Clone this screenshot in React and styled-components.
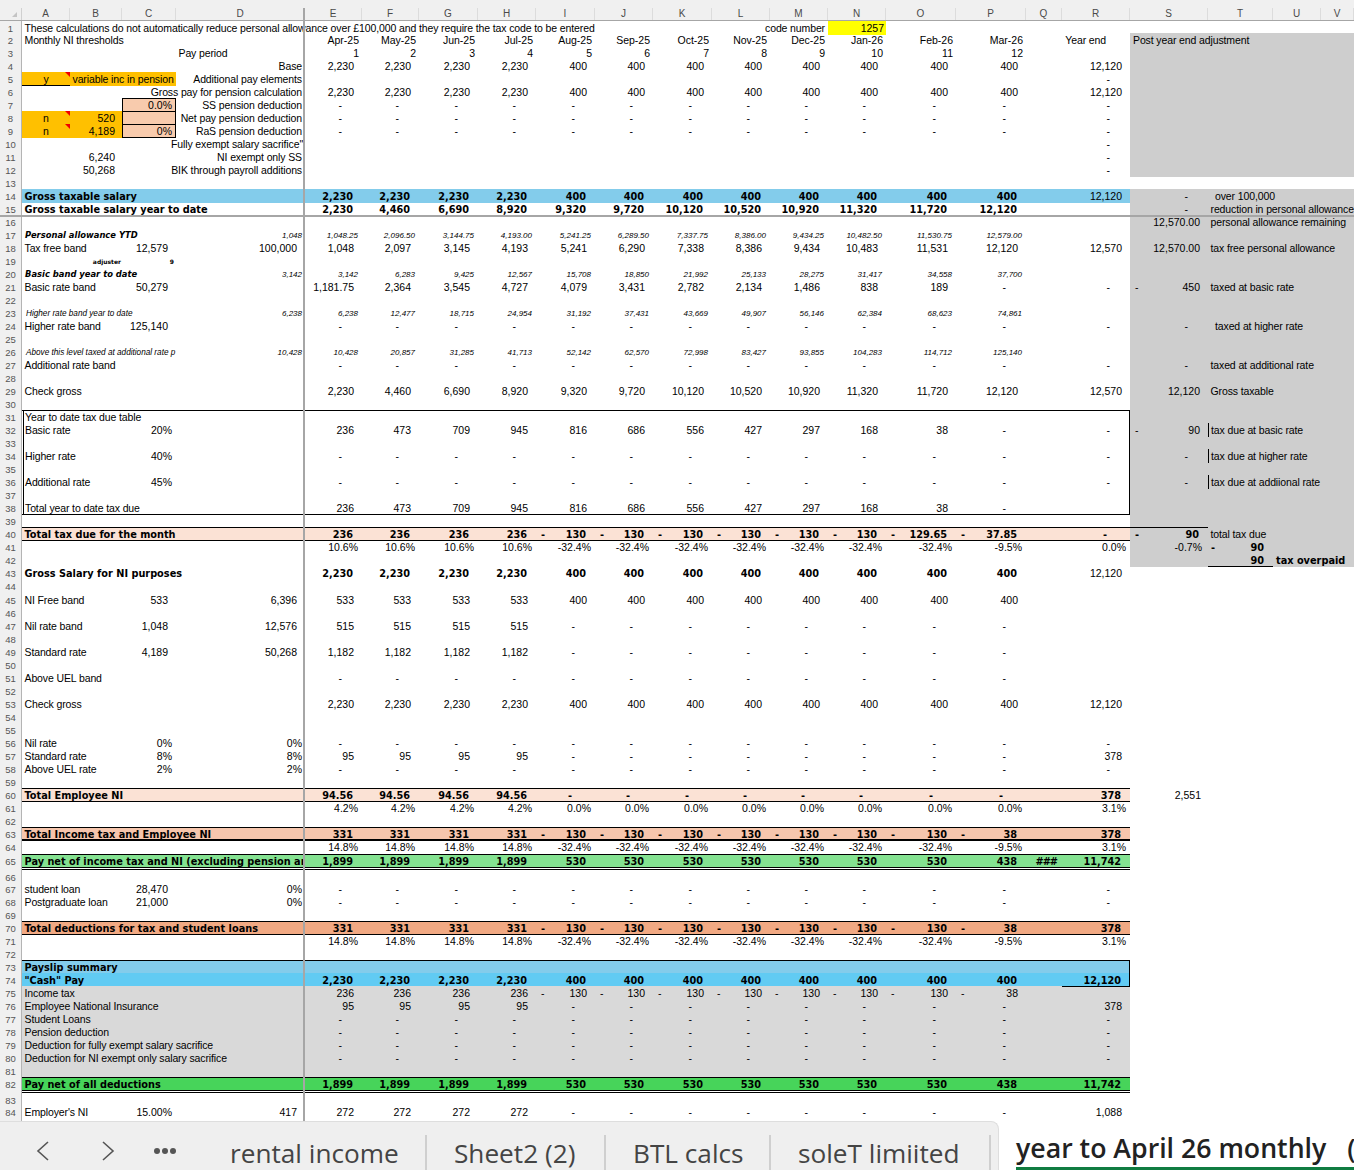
import React from 'react';
import styled, { createGlobalStyle } from 'styled-components';

const GlobalStyle = createGlobalStyle`
    html, body { margin: 0; padding: 0; background: #fff; }
    body { font-family: "Liberation Sans", Arial, sans-serif; }
`;

const COLS = ['A','B','C','D','E','F','G','H','I','J','K','L','M','N','O','P','Q','R','S','T','U','V'];
const MONTHS = COLS.slice(4, 16);
const WIDTHS = '22px 48px 52px 54px 129px 57px 57px 59px 58px 59px 58px 59px 58px 58px 58px 70px 70px 36px 68px 78px 65px 48px 33px';
const colIndex = (c) => COLS.indexOf(c);

const ROW_HEIGHTS = { 1: 12, 44: 14, 64: 14, 65: 16, 66: 12, 82: 16, 83: 12 };

const fonts = {
    text: 'font: 400 10.5px/13px "Liberation Sans", Arial, sans-serif;',
    label: 'font: 400 10.5px/13px "Liberation Sans", Arial, sans-serif; letter-spacing: -0.12px;',
    bold: 'font: 700 9.75px/13px "DejaVu Sans", Verdana, sans-serif;',
    hashes: 'font: 700 9.75px/13px "DejaVu Sans", Verdana, sans-serif; letter-spacing: -1px;',
    boldItalic: 'font: italic 700 8.4px/13px "DejaVu Sans", Verdana, sans-serif;',
    italic: 'font: italic 400 8px/13px "Liberation Sans", Arial, sans-serif;',
    italicLabel: 'font: italic 400 8.2px/13px "Liberation Sans", Arial, sans-serif;',
    tiny: 'font: 700 6px/13px "DejaVu Sans", Verdana, sans-serif;',
};

const Page = styled.div`
    position: relative;
    width: 1354px;
    height: 1170px;
    overflow: hidden;
    display: flex;
    flex-direction: column;
    background: #fff;
`;

const HeaderRow = styled.div`
    display: grid;
    grid-template-columns: ${WIDTHS};
    height: 21px;
    flex: none;
    background: #f0f0f0;
    border-bottom: 1px solid #a6a6a6;
    box-sizing: border-box;
`;

const Corner = styled.div`
    display: flex;
    justify-content: flex-end;
    align-items: flex-end;
    padding: 0 4px 3px 0;
    border-right: 1px solid #d0d0d0;
    margin-top: 8px;
    &::after {
        content: "";
        border-style: solid;
        border-width: 0 0 5px 5px;
        border-color: transparent transparent #c4c4c4 transparent;
    }
`;

const ColumnLabel = styled.div`
    display: flex;
    justify-content: center;
    align-items: center;
    margin-top: 8px;
    border-right: 1px solid #dcdcdc;
    color: #4a4a4a;
    font: 400 10px/12px "Liberation Sans", Arial, sans-serif;
`;

const Sheet = styled.div`
    height: 1100px;
    flex: none;
    overflow: hidden;
`;

const Row = styled.div`
    display: grid;
    grid-template-columns: ${WIDTHS};
    height: ${({ $height }) => $height}px;
`;

const RowNumber = styled.div`
    display: flex;
    justify-content: center;
    background: #f0f0f0;
    border-right: 1px solid #b4b4b4;
    box-sizing: border-box;
    padding-top: 1px;
    color: #555;
    font: 400 9.5px/13px "Liberation Sans", Arial, sans-serif;
    z-index: 2;
`;

const Cell = styled.div`
    position: relative;
    display: flex;
    min-width: 0;
    box-sizing: border-box;
    white-space: pre;
    color: #000;
    justify-content: ${({ $align }) => ({ left: 'flex-start', right: 'flex-end', center: 'center', lead: 'space-between' }[$align] || 'flex-start')};
    padding: 1px ${({ $right }) => $right || 0}px 0 ${({ $left }) => $left || 0}px;
    background: ${({ $fill }) => $fill || 'transparent'};
    box-shadow: ${({ $edges }) => $edges || 'none'};
    overflow: ${({ $clip }) => ($clip ? 'hidden' : 'visible')};
    grid-column: ${({ $span }) => ($span ? `span ${$span}` : 'auto')};
    z-index: ${({ $filled }) => ($filled ? 1 : 'auto')};
    ${({ $kind }) => fonts[$kind || 'text']}
`;

const CommentFlag = styled.span`
    position: absolute;
    top: 0;
    right: 0;
    border-style: solid;
    border-width: 0 5px 5px 0;
    border-color: transparent #f00000 transparent transparent;
`;

const FreezeColumn = styled.div`
    position: absolute;
    left: 303px;
    top: 8px;
    width: 2px;
    height: 1113px;
    background: #a6a6a6;
    z-index: 3;
`;

const FreezeRow = styled.div`
    position: absolute;
    left: 0;
    right: 0;
    top: 215px;
    height: 2px;
    background: #a6a6a6;
    z-index: 3;
`;

const TabBar = styled.div`
    flex: 1;
    display: flex;
    min-height: 0;
`;

const TabStrip = styled.div`
    width: 999px;
    flex: none;
    box-sizing: border-box;
    display: flex;
    background: #efefef;
    border-top: 1px solid #dedede;
    border-right: 1px solid #dedede;
    border-top-right-radius: 8px;
`;

const NavArea = styled.div`
    width: 203px;
    flex: none;
    box-sizing: border-box;
    padding: 19px 0 0 36px;
    display: flex;
    align-items: flex-start;
`;

const NavIcon = styled.svg`
    flex: none;
    margin-right: ${({ $gap }) => $gap}px;
`;

const Tab = styled.div`
    height: 35px;
    margin-top: 13px;
    width: ${({ $width }) => $width}px;
    flex: none;
    box-sizing: border-box;
    border-right: 2px solid #cfcfcf;
    padding-left: 27px;
    color: #444;
    font: 400 26.2px/36px "Open Sans", "Noto Sans", sans-serif;
    white-space: nowrap;
`;

const ActiveTab = styled.div`
    flex: 1;
    min-width: 0;
    padding-left: 17px;
    display: flex;
    flex-direction: column;
    overflow: hidden;
    background: #fff;
`;

const ActiveLabel = styled.div`
    margin-top: 9px;
    height: 37px;
    color: #222;
    font: 600 26.7px/36px "Open Sans", "Noto Sans", sans-serif;
    white-space: pre;
`;

const ActiveUnderline = styled.div`
    height: 3px;
    background: #107c41;
`;

/* cell helpers */
const L = (t, left = 2.5, kind = 'label') => ({ t, align: 'left', left, kind });
const Lab = (t, right = 3) => ({ t, align: 'right', right, kind: 'label' });
const Num = (t, right = 8) => ({ t, align: 'right', right });
const Bold = (t, right = 9) => ({ t, align: 'right', right, kind: 'bold' });
const Dash = (right = 20) => ({ t: '-', align: 'right', right });
const Pct = (t, right = 4) => ({ t, align: 'right', right });
const Ital = (t) => ({ t, align: 'right', right: 3, kind: 'italic' });

const parse = (v, kind) => {
    const bold = kind === 'bold';
    const pad = kind === 'pct' ? 4 : kind === 'date' || kind === 'period' ? 3 : kind === 'italic' ? 4 : bold ? 9 : 8;
    const font = bold ? 'bold' : kind === 'italic' ? 'italic' : 'text';
    if (v === '-') return { t: '-', align: 'right', right: bold ? 23 : 20, kind: font };
    if (v.startsWith('~')) return { t: v.slice(1), lead: true, align: 'lead', left: 5, right: pad, kind: font };
    return { t: v, align: 'right', right: pad, kind: font };
};

const series = (vals, kind = 'num') => {
    const out = {};
    vals.forEach((v, i) => { if (v !== null) out[MONTHS[i]] = parse(v, kind); });
    return out;
};

const rep = (a, n) => Array(n).fill(a);
const GROSS = [...rep('2,230', 4), ...rep('400', 8)];
const DASHES = rep('-', 12);
const YTD = ['2,230','4,460','6,690','8,920','9,320','9,720','10,120','10,520','10,920','11,320','11,720','12,120'];
const YTD_TAX = ['236','473','709','945','816','686','556','427','297','168','38','-'];
const NEG_130 = [...rep('~130', 7), '~38'];
const PCT_14 = [...rep('14.8%', 4), ...rep('-32.4%', 7), '-9.5%'];

const ORANGE = '#ffc000';
const PEACH = '#f8cbad';
const rd = { R: Dash() };
const boxLeft = 'inset 1px 0 0 #fff, inset 2px 0 0 #000';

const rows = [
    { n: 1, cells: { A: L('These calculations do not automatically reduce personal allowance over £100,000 and they require the tax code to be entered'), M: Lab('code number'), N: { ...Num('1257', 2), fill: '#ffff00' } } },
    { n: 2, cells: { A: L('Monthly NI thresholds'), ...series(['Apr-25','May-25','Jun-25','Jul-25','Aug-25','Sep-25','Oct-25','Nov-25','Dec-25','Jan-26','Feb-26','Mar-26'], 'date'), R: Lab('Year end', 24), S: L('Post year end adjustment', 3) } },
    { n: 3, cells: { D: L('Pay period'), ...series(['1','2','3','4','5','6','7','8','9','10','11','12'], 'period') } },
    { n: 4, cells: { D: Lab('Base'), ...series(GROSS), R: Num('12,120') } },
    { n: 5, cells: { A: { t: 'y', align: 'center', fill: ORANGE, flag: true, edges: 'inset 0 -1px 0 #000' }, B: { ...L('variable inc in pension'), fill: ORANGE }, C: { fill: ORANGE }, D: Lab('Additional pay elements'), ...rd } },
    { n: 6, cells: { D: Lab('Gross pay for pension calculation'), ...series(GROSS), R: Num('12,120') } },
    { n: 7, cells: { C: { ...Pct('0.0%'), fill: PEACH, edges: 'inset 0 0 0 1px #000' }, D: Lab('SS pension deduction'), ...series(DASHES), ...rd } },
    { n: 8, cells: { A: { t: 'n', align: 'center', fill: ORANGE, flag: true }, B: { ...Num('520', 7), fill: ORANGE }, C: { fill: PEACH, edges: 'inset 0 0 0 1px #000' }, D: Lab('Net pay pension deduction'), ...series(DASHES), ...rd } },
    { n: 9, cells: { A: { t: 'n', align: 'center', fill: ORANGE, flag: true }, B: { ...Num('4,189', 7), fill: ORANGE }, C: { ...Pct('0%'), fill: PEACH, edges: 'inset 0 0 0 1px #000' }, D: Lab('RaS pension deduction'), ...series(DASHES), ...rd } },
    { n: 10, cells: { D: Lab('Fully exempt salary sacrifice"', 2), ...rd } },
    { n: 11, cells: { B: Num('6,240', 7), D: Lab('NI exempt only SS'), ...rd } },
    { n: 12, cells: { B: Num('50,268', 7), D: Lab('BIK through payroll additions'), ...rd } },
    { n: 13, cells: {} },
    { n: 14, fill: '#83cceb', cells: { A: L('Gross taxable salary', 2.5, 'bold'), ...series(GROSS, 'bold'), R: Num('12,120'), S: Dash(), T: L('over 100,000', 7) } },
    { n: 15, cells: { A: L('Gross taxable salary year to date', 2.5, 'bold'), ...series(YTD, 'bold'), S: Dash(), T: L('reduction in personal allowance') } },
    { n: 16, cells: { S: Num('12,570.00'), T: L('personal allowance remaining') } },
    { n: 17, cells: { A: L('Personal allowance YTD', 3, 'boldItalic'), D: Ital('1,048'), ...series(['1,048.25','2,096.50','3,144.75','4,193.00','5,241.25','6,289.50','7,337.75','8,386.00','9,434.25','10,482.50','11,530.75','12,579.00'], 'italic') } },
    { n: 18, cells: { A: L('Tax free band'), C: Num('12,579'), D: Num('100,000'), ...series(['1,048','2,097','3,145','4,193','5,241','6,290','7,338','8,386','9,434','10,483','11,531','12,120']), R: Num('12,570'), S: Num('12,570.00'), T: L('tax free personal allowance') } },
    { n: 19, cells: { B: { t: 'adjuster', align: 'right', right: 1, kind: 'tiny' }, C: { t: '9', align: 'right', right: 2, kind: 'tiny' } } },
    { n: 20, cells: { A: L('Basic band year to date', 3, 'boldItalic'), D: Ital('3,142'), ...series(['3,142','6,283','9,425','12,567','15,708','18,850','21,992','25,133','28,275','31,417','34,558','37,700'], 'italic') } },
    { n: 21, cells: { A: L('Basic rate band'), C: Num('50,279'), ...series(['1,181.75','2,364','3,545','4,727','4,079','3,431','2,782','2,134','1,486','838','189','-']), ...rd, S: { t: '450', lead: true, align: 'lead', left: 5, right: 8 }, T: L('taxed at basic rate') } },
    { n: 22, cells: {} },
    { n: 23, cells: { A: L('Higher rate band year to date', 4, 'italicLabel'), D: Ital('6,238'), ...series(['6,238','12,477','18,715','24,954','31,192','37,431','43,669','49,907','56,146','62,384','68,623','74,861'], 'italic') } },
    { n: 24, cells: { A: L('Higher rate band'), C: Num('125,140'), ...series(DASHES), ...rd, S: Dash(), T: L('taxed at higher rate', 7) } },
    { n: 25, cells: {} },
    { n: 26, cells: { A: L('Above this level taxed at additional rate p', 4, 'italicLabel'), D: Ital('10,428'), ...series(['10,428','20,857','31,285','41,713','52,142','62,570','72,998','83,427','93,855','104,283','114,712','125,140'], 'italic') } },
    { n: 27, cells: { A: L('Additional rate band'), ...series(DASHES), ...rd, S: Dash(), T: L('taxed at additional rate') } },
    { n: 28, cells: {} },
    { n: 29, cells: { A: L('Check gross'), ...series(YTD), R: Num('12,570'), S: Num('12,120'), T: L('Gross taxable') } },
    { n: 30, cells: {} },
    { n: 31, box: true, top: 1, cells: { A: L('Year to date tax due table', 3) } },
    { n: 32, box: true, cells: { A: L('Basic rate', 3), C: Pct('20%'), ...series(YTD_TAX), ...rd, S: { t: '90', lead: true, align: 'lead', left: 5, right: 8 }, T: { ...L('tax due at basic rate', 3), edges: 'inset 1px 0 0 #000' } } },
    { n: 33, box: true, cells: {} },
    { n: 34, box: true, cells: { A: L('Higher rate', 3), C: Pct('40%'), ...series(DASHES), ...rd, S: Dash(), T: { ...L('tax due at higher rate', 3), edges: 'inset 1px 0 0 #000' } } },
    { n: 35, box: true, cells: {} },
    { n: 36, box: true, cells: { A: L('Additional rate', 3), C: Pct('45%'), ...series(DASHES), ...rd, S: Dash(), T: { ...L('tax due at addiional rate', 3), edges: 'inset 1px 0 0 #000' } } },
    { n: 37, box: true, cells: {} },
    { n: 38, box: true, bottom: 1, cells: { A: L('Total year to date tax due', 3), ...series(YTD_TAX) } },
    { n: 39, cells: {} },
    { n: 40, fill: '#fbe2d5', top: 1, bottom: 1, edgeTo: 'S', cells: { A: L('Total tax due for the month', 2.5, 'bold'), ...series(['236','236','236','236', ...rep('~130', 6), '~129.65', '~37.85'], 'bold'), R: parse('-', 'bold'), S: { t: '90', lead: true, align: 'lead', left: 5, right: 9, kind: 'bold' }, T: L('total tax due') } },
    { n: 41, cells: { ...series([...rep('10.6%', 4), ...rep('-32.4%', 7), '-9.5%'], 'pct'), R: Pct('0.0%'), S: Pct('-0.7%', 6), T: { t: '90', lead: true, align: 'lead', left: 3, right: 9, kind: 'bold', edges: 'inset 0 -1px 0 #000' } } },
    { n: 42, cells: { T: { ...Bold('90'), edges: 'inset 0 -1px 0 #000' }, U: L('tax overpaid', 3, 'bold') } },
    { n: 43, cells: { A: L('Gross Salary for NI purposes', 2.5, 'bold'), ...series(GROSS, 'bold'), R: Num('12,120') } },
    { n: 44, cells: {} },
    { n: 45, cells: { A: L('NI Free band'), C: Num('533'), D: Num('6,396'), ...series([...rep('533', 4), ...rep('400', 8)]) } },
    { n: 46, cells: {} },
    { n: 47, cells: { A: L('Nil rate band'), C: Num('1,048'), D: Num('12,576'), ...series([...rep('515', 4), ...rep('-', 8)]) } },
    { n: 48, cells: {} },
    { n: 49, cells: { A: L('Standard rate'), C: Num('4,189'), D: Num('50,268'), ...series([...rep('1,182', 4), ...rep('-', 8)]) } },
    { n: 50, cells: {} },
    { n: 51, cells: { A: L('Above UEL band'), ...series(DASHES) } },
    { n: 52, cells: {} },
    { n: 53, cells: { A: L('Check gross'), ...series(GROSS), R: Num('12,120') } },
    { n: 54, cells: {} },
    { n: 55, cells: {} },
    { n: 56, cells: { A: L('Nil rate'), C: Pct('0%'), D: Pct('0%', 3), ...series(DASHES), ...rd } },
    { n: 57, cells: { A: L('Standard rate'), C: Pct('8%'), D: Pct('8%', 3), ...series([...rep('95', 4), ...rep('-', 8)]), R: Num('378') } },
    { n: 58, cells: { A: L('Above UEL rate'), C: Pct('2%'), D: Pct('2%', 3), ...series(DASHES), ...rd } },
    { n: 59, cells: {} },
    { n: 60, fill: '#fbe2d5', top: 1, bottom: 1, cells: { A: L('Total Employee NI', 2.5, 'bold'), ...series([...rep('94.56', 4), ...rep('-', 8)], 'bold'), R: Bold('378'), S: Num('2,551', 7) } },
    { n: 61, cells: { ...series([...rep('4.2%', 4), ...rep('0.0%', 8)], 'pct'), R: Pct('3.1%') } },
    { n: 62, cells: {} },
    { n: 63, fill: '#f6c6ad', top: 1, bottom: 2, cells: { A: L('Total Income tax and Employee NI', 2.5, 'bold'), ...series([...rep('331', 4), ...NEG_130], 'bold'), R: Bold('378') } },
    { n: 64, cells: { ...series(PCT_14, 'pct'), R: Pct('3.1%') } },
    { n: 65, fill: '#84e291', top: 1, bottom: 'double', cells: { A: { ...L('Pay net of income tax and NI (excluding pension and', 2.5, 'bold'), span: 4, clip: true }, ...series([...rep('1,899', 4), ...rep('530', 7), '438'], 'bold'), Q: { t: '###', align: 'right', right: 5, kind: 'hashes' }, R: Bold('11,742') } },
    { n: 66, cells: {} },
    { n: 67, cells: { A: L('student loan'), C: Num('28,470'), D: Pct('0%', 3), ...series(DASHES), ...rd } },
    { n: 68, cells: { A: L('Postgraduate loan'), C: Num('21,000'), D: Pct('0%', 3), ...series(DASHES), ...rd } },
    { n: 69, cells: {} },
    { n: 70, fill: '#f1a983', top: 1, bottom: 1, cells: { A: L('Total deductions for tax and student loans', 2.5, 'bold'), ...series([...rep('331', 4), ...NEG_130], 'bold'), R: Bold('378') } },
    { n: 71, cells: { ...series(PCT_14, 'pct'), R: Pct('3.1%') } },
    { n: 72, cells: {} },
    { n: 73, fill: '#83cceb', top: 1, boxEnd: true, cells: { A: L('Payslip summary', 2.5, 'bold') } },
    { n: 74, fill: '#61cbf3', bottom: 1, boxEnd: true, cells: { A: L('"Cash" Pay', 2.5, 'bold'), ...series(GROSS, 'bold'), R: Bold('12,120') } },
    { n: 75, fill: '#d9d9d9', cells: { A: L('Income tax'), ...series([...rep('236', 4), ...rep('~130', 7), '~38']) } },
    { n: 76, fill: '#d9d9d9', cells: { A: L('Employee National Insurance'), ...series([...rep('95', 4), ...rep('-', 8)]), R: Num('378') } },
    { n: 77, fill: '#d9d9d9', cells: { A: L('Student Loans'), ...series(DASHES), ...rd } },
    { n: 78, fill: '#d9d9d9', cells: { A: L('Pension deduction'), ...series(DASHES), ...rd } },
    { n: 79, fill: '#d9d9d9', cells: { A: L('Deduction for fully exempt salary sacrifice'), ...series(DASHES), ...rd } },
    { n: 80, fill: '#d9d9d9', cells: { A: L('Deduction for NI exempt only salary sacrifice'), ...series(DASHES), ...rd } },
    { n: 81, fill: '#d9d9d9', cells: {} },
    { n: 82, fill: '#47d45a', top: 1, bottom: 'double', cells: { A: L('Pay net of all deductions', 2.5, 'bold'), ...series([...rep('1,899', 4), ...rep('530', 7), '438'], 'bold'), R: Bold('11,742') } },
    { n: 83, cells: {} },
    { n: 84, cells: { A: L("Employer's NI"), C: Pct('15.00%'), D: Num('417'), ...series([...rep('272', 4), ...rep('-', 8)]), R: Num('1,088') } },
    { n: 85, cells: {} },
];

const isGreyPanel = (n, col) => colIndex(col) >= colIndex('S') && ((n >= 2 && n <= 12) || (n >= 14 && n <= 42));

const edgesFor = (row, col, cell) => {
    const i = colIndex(col);
    const inBand = i <= colIndex(row.edgeTo || 'R');
    const list = [];
    if (cell && cell.edges) list.push(cell.edges);
    if (inBand && row.top) list.push('inset 0 1px 0 #000');
    if (inBand && row.bottom === 1) list.push('inset 0 -1px 0 #000');
    if (inBand && row.bottom === 2) list.push('inset 0 -2px 0 #000');
    if (inBand && row.bottom === 'double') list.push('inset 0 -1px 0 #000', 'inset 0 -2px 0 #fff', 'inset 0 -3px 0 #000');
    if (row.box && col === 'A') list.push(boxLeft);
    if ((row.box || row.boxEnd) && col === 'R') list.push('inset -1px 0 0 #000');
    return list.join(', ');
};

const SheetRow = ({ row }) => {
    let skip = 0;
    return (
        <Row $height={ROW_HEIGHTS[row.n] || 13}>
            <RowNumber>{row.n}</RowNumber>
            {COLS.map((col) => {
                if (skip > 0) { skip -= 1; return null; }
                const cell = row.cells[col];
                if (cell && cell.span) skip = cell.span - 1;
                const inFill = colIndex(col) <= colIndex('R');
                const fill = (cell && cell.fill) || (inFill && row.fill) || (isGreyPanel(row.n, col) ? '#cecece' : undefined);
                return (
                    <Cell
                        key={col}
                        $fill={fill}
                        $edges={edgesFor(row, col, cell)}
                        $align={cell && cell.align}
                        $left={cell && cell.left}
                        $right={cell && cell.right}
                        $kind={cell && cell.kind}
                        $span={cell && cell.span}
                        $clip={cell && cell.clip}
                        $filled={cell && cell.t}
                    >
                        {cell && cell.lead && <span>-</span>}
                        {cell && cell.t && <span>{cell.t}</span>}
                        {cell && cell.flag && <CommentFlag />}
                    </Cell>
                );
            })}
        </Row>
    );
};

const Chevron = ({ points, gap }) => (
    <NavIcon $gap={gap} width="14" height="20" viewBox="0 0 14 20" fill="none" stroke="#555" strokeWidth="1.6">
        <polyline points={points} />
    </NavIcon>
);

const Dots = () => (
    <NavIcon $gap={0} width="24" height="20" viewBox="0 0 24 20" fill="#555">
        <circle cx="4" cy="10" r="3" />
        <circle cx="12" cy="10" r="3" />
        <circle cx="20" cy="10" r="3" />
    </NavIcon>
);

const tabs = [
    { name: 'rental income', width: 224 },
    { name: 'Sheet2 (2)', width: 179 },
    { name: 'BTL calcs', width: 165 },
    { name: 'soleT limiited', width: 220 },
];

export default function App() {
    return (
        <Page>
            <GlobalStyle />
            <HeaderRow>
                <Corner />
                {COLS.map((c) => <ColumnLabel key={c}>{c}</ColumnLabel>)}
            </HeaderRow>
            <Sheet>
                {rows.map((row) => <SheetRow key={row.n} row={row} />)}
            </Sheet>
            <FreezeColumn />
            <FreezeRow />
            <TabBar>
                <TabStrip>
                    <NavArea>
                        <Chevron points="12,1 2,10 12,19" gap={51} />
                        <Chevron points="2,1 12,10 2,19" gap={38} />
                        <Dots />
                    </NavArea>
                    {tabs.map((t) => <Tab key={t.name} $width={t.width}>{t.name}</Tab>)}
                </TabStrip>
                <ActiveTab>
                    <ActiveLabel>{'year to April 26 monthly   ('}</ActiveLabel>
                    <ActiveUnderline />
                </ActiveTab>
            </TabBar>
        </Page>
    );
}
